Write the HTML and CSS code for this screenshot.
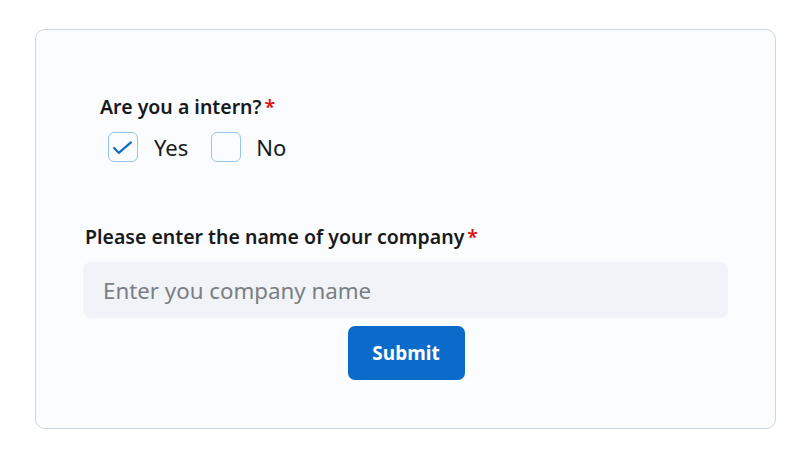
FILE: index.html
```html
<!DOCTYPE html>
<html lang="en">
<head>
<meta charset="utf-8">
<title>Intern form</title>
<link rel="stylesheet" href="styles.css">
</head>
<body>
<div class="page">
  <form class="card">
    <div class="group">
      <div class="label">Are you a intern?<span class="req">*</span></div>
      <div class="options">
        <label class="option">
          <span class="box checked">
            <svg viewBox="0 0 30 30" width="30" height="30"><path d="M5.5 16 L10.5 21.3 L23.5 10" fill="none" stroke="#0b6bcb" stroke-width="2.3" stroke-linecap="round" stroke-linejoin="round"/></svg>
          </span>
          <span class="opt-text">Yes</span>
        </label>
        <label class="option">
          <span class="box"></span>
          <span class="opt-text">No</span>
        </label>
      </div>
    </div>
    <div class="company">
      <div class="label label-company">Please enter the name of your company<span class="req">*</span></div>
      <div class="input">Enter you company name</div>
    </div>
    <div class="actions">
      <button type="button" class="submit">Submit</button>
    </div>
  </form>
</div>
</body>
</html>
```

FILE: styles.css
```css
* { box-sizing: border-box; }
html, body { margin: 0; padding: 0; background: #ffffff; }
body {
  font-family: "Noto Sans", "Open Sans", sans-serif;
  color: #171a1c;
}
.page {
  padding: 29px 29px 0 35px;
}
.card {
  width: 741px;
  height: 400px;
  background: #fbfcfe;
  border: 1px solid #cdd7e1;
  border-radius: 10px;
  padding: 65px 47px 0 47px;
  display: flex;
  flex-direction: column;
}
.group {
  padding-left: 17px;
}
.label {
  font-size: 19.5px;
  font-weight: 600;
  line-height: 24px;
  display: flex;
  align-items: flex-start;
}
.req {
  color: #e01010;
  margin-left: 3px;
}
.options {
  display: flex;
  align-items: center;
  gap: 23px;
  margin-top: 13px;
  padding-left: 8px;
}
.option {
  display: flex;
  align-items: center;
  gap: 16px;
}
.option + .option {
  gap: 15px;
}
.box {
  width: 30px;
  height: 30px;
  border: 1px solid #97c3f0;
  border-radius: 6px;
  background: #fbfcfe;
  display: flex;
  align-items: center;
  justify-content: center;
}
.box svg { display: block; }
.opt-text {
  font-size: 22px;
  line-height: 30px;
}
.company {
  margin-top: 63px;
}
.label-company {
  padding-left: 2px;
}
.input {
  margin-top: 13px;
  height: 56px;
  background: #f0f3f7;
  border-radius: 8px;
  padding: 0 20px;
  display: flex;
  align-items: center;
  font-size: 22.3px;
  color: #7b7e83;
}
.actions {
  display: flex;
  justify-content: center;
  margin-top: 8px;
}
.submit {
  width: 117px;
  height: 54px;
  border: 0;
  border-radius: 7px;
  background: #0b6bcb;
  color: #ffffff;
  font-family: "Noto Sans", "Open Sans", sans-serif;
  font-size: 19px;
  font-weight: 700;
  padding: 0;
  margin-left: 1px;
}
```
